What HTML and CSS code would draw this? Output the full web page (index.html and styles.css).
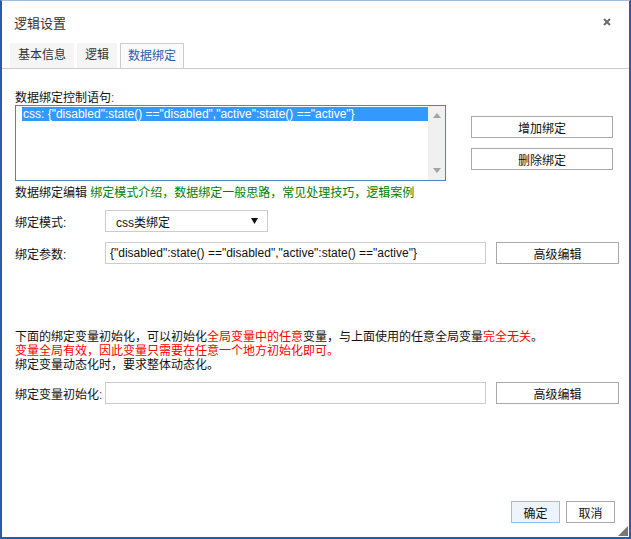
FILE: index.html
```html
<!DOCTYPE html>
<html lang="zh-CN">
<head>
<meta charset="utf-8">
<title>逻辑设置</title>
<link rel="stylesheet" href="styles.css">
</head>
<body>
<div class="dialog">
  <div class="header">
    <span class="title">逻辑设置</span>
    <svg class="close" width="8" height="8" viewBox="0 0 8 8"><path d="M1 1L7 7M7 1L1 7" stroke="#6b6b6b" stroke-width="2" fill="none"/></svg>
  </div>
  <div class="tabs">
    <div class="tab">基本信息</div>
    <div class="tab">逻辑</div>
    <div class="tab active">数据绑定</div>
  </div>
  <div class="content">
    <div class="line">数据绑定控制语句<span class="colon">:</span></div>
    <div class="bind-row">
      <div class="listbox">
        <div class="list">
          <div class="item selected">css: {"disabled":state() =="disabled","active":state() =="active"}</div>
        </div>
        <div class="scrollbar">
          <svg width="8" height="5" viewBox="0 0 8 5"><path d="M0 5L4 0L8 5Z" fill="#a3a3a3"/></svg>
          <svg width="8" height="5" viewBox="0 0 8 5"><path d="M0 0L8 0L4 5Z" fill="#a3a3a3"/></svg>
        </div>
      </div>
      <div class="side-buttons">
        <button class="btn wide">增加绑定</button>
        <button class="btn wide">删除绑定</button>
      </div>
    </div>
    <div class="line links">数据绑定编辑 <span class="green">绑定模式介绍，数据绑定一般思路，常见处理技巧，逻辑案例</span></div>
    <div class="form-row first">
      <span class="label">绑定模式:</span>
      <div class="select"><span>css类绑定</span><svg width="7" height="6" viewBox="0 0 7 6"><path d="M0 0L7 0L3.5 6Z" fill="#111"/></svg></div>
    </div>
    <div class="form-row">
      <span class="label">绑定参数:</span>
      <div class="input">{"disabled":state() =="disabled","active":state() =="active"}</div>
      <button class="btn edit">高级编辑</button>
    </div>
    <div class="notes">
      <div>下面的绑定变量初始化，可以初始化<span class="red">全局变量中的任意</span>变量，与上面使用的任意全局变量<span class="red">完全无关</span>。</div>
      <div class="red">变量全局有效，因此变量只需要在任意一个地方初始化即可。</div>
      <div>绑定变量动态化时，要求整体动态化。</div>
    </div>
    <div class="form-row">
      <span class="label">绑定变量初始化<span class="colon">:</span></span>
      <div class="input"></div>
      <button class="btn edit">高级编辑</button>
    </div>
  </div>
  <div class="footer">
    <button class="btn small primary">确定</button>
    <button class="btn small">取消</button>
  </div>
  <div class="grip"></div>
</div>
</body>
</html>
```
FILE: styles.css
```css
html, body {
  margin: 0;
  padding: 0;
  background: #fff;
}

.dialog {
  position: relative;
  width: 631px;
  height: 539px;
  box-sizing: border-box;
  border: 2px solid #2c5ba6;
  border-top: 1px solid #a4bbe0;
  background: #fff;
  display: flex;
  flex-direction: column;
  font-family: "Liberation Sans", "Noto Sans CJK SC", sans-serif;
  font-size: 12px;
  color: #111;
}

.header {
  height: 42px;
  display: flex;
  align-items: center;
  justify-content: space-between;
  padding: 0 18px 0 12px;
}

.title {
  font-size: 13px;
  color: #333;
}

.close {
  display: block;
}

.tabs {
  display: flex;
  gap: 3px;
  padding-left: 8px;
  height: 25px;
  border-bottom: 1px solid #cccccc;
}

.tab {
  line-height: 25px;
  padding: 0 8px;
  background: #f5f5f5;
  color: #333;
}

.tab.active {
  background: #fafafa;
  border: 1px solid #cccccc;
  border-bottom: none;
  line-height: 24px;
  padding: 0 7px;
  color: #2b5ca8;
}

.content {
  padding: 22px 0 0 13px;
}

.line {
  line-height: 14px;
  height: 14px;
}

.colon {
  color: #8b2a6b;
}

.bind-row {
  display: flex;
}

.listbox {
  width: 431px;
  height: 76px;
  box-sizing: border-box;
  border: 1px solid #4e80cc;
  display: flex;
}

.list {
  flex: 1;
  padding: 1px 0 0 6px;
}

.item {
  line-height: 14px;
  padding-left: 1px;
  white-space: nowrap;
}

.item.selected {
  background: #3399ff;
  color: #fff;
}

.scrollbar {
  width: 17px;
  background: #f0f0f0;
  display: flex;
  flex-direction: column;
  justify-content: space-between;
  align-items: center;
  padding: 7px 0 7px;
}

.scrollbar svg {
  display: block;
}

.side-buttons {
  display: flex;
  flex-direction: column;
  gap: 10px;
  padding-top: 11px;
  margin-left: 25px;
}

.btn {
  height: 22px;
  box-sizing: border-box;
  border: 1px solid #a9a9a9;
  background: #fff;
  font-family: "Liberation Sans", "Noto Sans CJK SC", sans-serif;
  font-size: 12px;
  color: #111;
  padding: 0;
  margin: 0;
}

.btn.wide {
  width: 142px;
}

.btn.edit {
  width: 123px;
  margin-left: 10px;
}

.btn.small {
  width: 49px;
}

.btn.primary {
  background: #eef4fd;
  border-color: #98bdf0;
}

.links {
  margin-top: 5px;
}

.green {
  color: #008000;
}

.red {
  color: #ff0000;
}

.form-row {
  display: flex;
  align-items: center;
  height: 22px;
  margin-top: 10px;
}

.label {
  width: 90px;
  flex: none;
  white-space: nowrap;
}

.select {
  width: 163px;
  height: 22px;
  box-sizing: border-box;
  border: 1px solid #cccccc;
  display: flex;
  align-items: center;
  justify-content: space-between;
  padding: 0 9px 0 10px;
}

.select svg {
  display: block;
}

.input {
  width: 381px;
  height: 22px;
  box-sizing: border-box;
  border: 1px solid #cccccc;
  padding-left: 4px;
  line-height: 20px;
  white-space: nowrap;
  overflow: hidden;
}

.notes {
  margin-top: 66px;
  line-height: 14px;
}

.footer {
  margin-top: auto;
  display: flex;
  justify-content: flex-end;
  gap: 6px;
  padding: 0 14px 14px 0;
}

.grip {
  position: absolute;
  right: 1px;
  bottom: 1px;
  width: 0;
  height: 0;
  border-left: 10px solid transparent;
  border-bottom: 10px solid #777;
}
```
